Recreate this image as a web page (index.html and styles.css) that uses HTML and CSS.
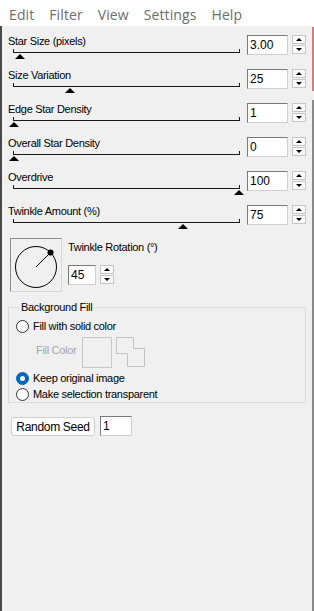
FILE: index.html
```html
<!DOCTYPE html>
<html lang="en">

<head>
    <meta charset="UTF-8">
    <meta name="viewport" content="width=device-width, initial-scale=1.0">
    <title>Twinkle</title>
    <link rel="stylesheet" href="styles.css">
</head>

<body>
    <div class="menu">
        <span>Edit</span>
        <span>Filter</span>
        <span>View</span>
        <span>Settings</span>
        <span>Help</span>
    </div>

    <div class="panel">
        <div class="row">
            <div class="control">
                <div class="label">Star Size (pixels)</div>
                <div class="slider"><span class="thumb" style="left: 2.7%"></span></div>
            </div>
            <div class="field">3.00</div>
            <div class="spin"><span class="up"></span><span class="down"></span></div>
        </div>
        <div class="row">
            <div class="control">
                <div class="label">Size Variation</div>
                <div class="slider"><span class="thumb" style="left: 25%"></span></div>
            </div>
            <div class="field">25</div>
            <div class="spin"><span class="up"></span><span class="down"></span></div>
        </div>
        <div class="row">
            <div class="control">
                <div class="label">Edge Star Density</div>
                <div class="slider"><span class="thumb" style="left: 0%"></span></div>
            </div>
            <div class="field">1</div>
            <div class="spin"><span class="up"></span><span class="down"></span></div>
        </div>
        <div class="row">
            <div class="control">
                <div class="label">Overall Star Density</div>
                <div class="slider"><span class="thumb" style="left: 0%"></span></div>
            </div>
            <div class="field">0</div>
            <div class="spin"><span class="up"></span><span class="down"></span></div>
        </div>
        <div class="row">
            <div class="control">
                <div class="label">Overdrive</div>
                <div class="slider"><span class="thumb" style="left: 100%"></span></div>
            </div>
            <div class="field">100</div>
            <div class="spin"><span class="up"></span><span class="down"></span></div>
        </div>
        <div class="row">
            <div class="control">
                <div class="label">Twinkle Amount (%)</div>
                <div class="slider"><span class="thumb" style="left: 75%"></span></div>
            </div>
            <div class="field">75</div>
            <div class="spin"><span class="up"></span><span class="down"></span></div>
        </div>

        <div class="rotation">
            <div class="dial">
                <svg width="50" height="52" viewBox="0 0 50 52">
                    <circle cx="25" cy="28" r="20.5" fill="none" stroke="#000" stroke-width="1"/>
                    <line x1="25" y1="28" x2="39.5" y2="13.5" stroke="#000" stroke-width="1"/>
                    <circle cx="39.5" cy="13.5" r="3" fill="#000"/>
                </svg>
            </div>
            <div class="rotation-side">
                <div class="label">Twinkle Rotation (&deg;)</div>
                <div class="small-spin">
                    <div class="field short">45</div>
                    <div class="spin"><span class="up"></span><span class="down"></span></div>
                </div>
            </div>
        </div>

        <fieldset class="group">
            <legend>Background Fill</legend>
            <div class="option"><span class="radio"></span>Fill with solid color</div>
            <div class="fill-row">
                <span class="disabled">Fill Color</span>
                <span class="swatch"></span>
                <svg width="30" height="31" viewBox="0 0 30 31">
                    <path d="M0.5 0.5H17.5V11.5H28.5V29.5H11.5V16.5H0.5Z" fill="none" stroke="#c3c3c3"/>
                </svg>
            </div>
            <div class="option"><span class="radio checked"></span>Keep original image</div>
            <div class="option"><span class="radio"></span>Make selection transparent</div>
        </fieldset>

        <div class="seed">
            <button class="seed-button">Random Seed</button>
            <div class="field seed-field">1</div>
        </div>
    </div>
</body>

</html>
```

FILE: styles.css
```css
body {
    margin: 0;
    padding: 0;
    font-family: "Liberation Sans", Arial, sans-serif;
    font-size: 11px;
    letter-spacing: -0.3px;
    color: #000;
    background:
        linear-gradient(#4a4a4a, #4a4a4a) left 26px / 2px 100% no-repeat,
        linear-gradient(#c98080, #c98080) right 27px / 2px 64px no-repeat,
        linear-gradient(#8a8a8a, #8a8a8a) right 100px / 2px 100% no-repeat,
        #f0f0f0;
    height: 611px;
}

.menu {
    display: flex;
    gap: 15px;
    height: 26px;
    padding-left: 9px;
    background-color: #fff;
    font-family: "Open Sans", sans-serif;
    font-size: 14px;
    letter-spacing: 0.1px;
    line-height: 30px;
    color: #6d6d6d;
}

.panel {
    padding: 8px 8px 0 8px;
}

.row {
    display: grid;
    grid-template-columns: 1fr 41px 16px;
    column-gap: 2px;
    height: 34px;
}

.row .spin {
    margin-left: 2px;
}

.label {
    height: 14px;
    line-height: 14px;
    white-space: nowrap;
}

.slider {
    position: relative;
    height: 3px;
    margin: 1px 5px 0 5px;
    border: solid #1a1a1a;
    border-width: 0 1px 1px 1px;
}

.thumb {
    position: absolute;
    top: 5px;
    width: 0;
    height: 0;
    margin-left: -5px;
    border-left: 5px solid transparent;
    border-right: 5px solid transparent;
    border-bottom: 5px solid #000;
}

.field {
    box-sizing: border-box;
    height: 20px;
    margin-top: 1px;
    padding: 2px 0 0 2px;
    background-color: #fff;
    border: 1px solid;
    border-color: #7a7a7a #cfcfcf #cfcfcf #7a7a7a;
    font-size: 12px;
    letter-spacing: 0;
    line-height: 15px;
}

.spin {
    display: flex;
    flex-direction: column;
    gap: 1px;
    width: 14px;
    margin-top: 1px;
}

.spin span {
    box-sizing: border-box;
    display: flex;
    justify-content: center;
    align-items: center;
    height: 9px;
    background-color: #fbfbfb;
    border: 1px solid #c6c6c6;
}

.spin span::after {
    content: "";
    width: 0;
    height: 0;
    border-left: 3px solid transparent;
    border-right: 3px solid transparent;
}

.spin .up::after {
    border-bottom: 3px solid #000;
}

.spin .down::after {
    border-top: 3px solid #000;
}

.rotation {
    display: flex;
    gap: 6px;
    padding-left: 2px;
    height: 54px;
}

.dial {
    box-sizing: border-box;
    width: 52px;
    height: 54px;
    border: 1px solid;
    border-color: #8a8a8a #d6d6d6 #d6d6d6 #8a8a8a;
}

.dial svg {
    display: block;
}

.rotation-side .label {
    margin-top: 2px;
}

.small-spin {
    display: flex;
    gap: 4px;
    margin-top: 11px;
}

.field.short {
    width: 28px;
    margin-top: 0;
}

.small-spin .spin {
    margin-top: 0;
}

.group {
    margin: 8px 0 0 0;
    padding: 4px 0 4px 7px;
    border: 1px solid #dcdcdc;
    height: 93px;
}

.group legend {
    padding: 0 2px;
    margin-left: 3px;
    line-height: 14px;
}

.option {
    display: flex;
    align-items: center;
    gap: 4px;
    height: 16px;
}

.radio {
    box-sizing: border-box;
    display: inline-flex;
    justify-content: center;
    align-items: center;
    width: 13px;
    height: 13px;
    border: 1px solid #333;
    border-radius: 50%;
    background-color: #fff;
}

.radio.checked {
    border-color: #0067c0;
    background-color: #0067c0;
}

.radio.checked::after {
    content: "";
    width: 5px;
    height: 5px;
    border-radius: 50%;
    background-color: #fff;
}

.fill-row {
    display: flex;
    align-items: flex-start;
    height: 36px;
    padding: 3px 0 0 20px;
    box-sizing: border-box;
}

.disabled {
    color: #a6a6a6;
    margin-top: 7px;
    width: 46px;
}

.swatch {
    box-sizing: border-box;
    width: 30px;
    height: 31px;
    border: 1px solid #c8c8c8;
    margin-right: 4px;
}

.seed {
    display: flex;
    gap: 5px;
    padding-left: 3px;
    margin-top: 14px;
}

.seed-button {
    box-sizing: border-box;
    width: 84px;
    height: 19px;
    padding: 0;
    background-color: #fdfdfd;
    border: 1px solid #d0d0d0;
    border-radius: 3px;
    font-family: "Liberation Sans", Arial, sans-serif;
    font-size: 12px;
    letter-spacing: -0.3px;
    color: #000;
}

.field.seed-field {
    width: 32px;
    margin-top: -1px;
}
```
